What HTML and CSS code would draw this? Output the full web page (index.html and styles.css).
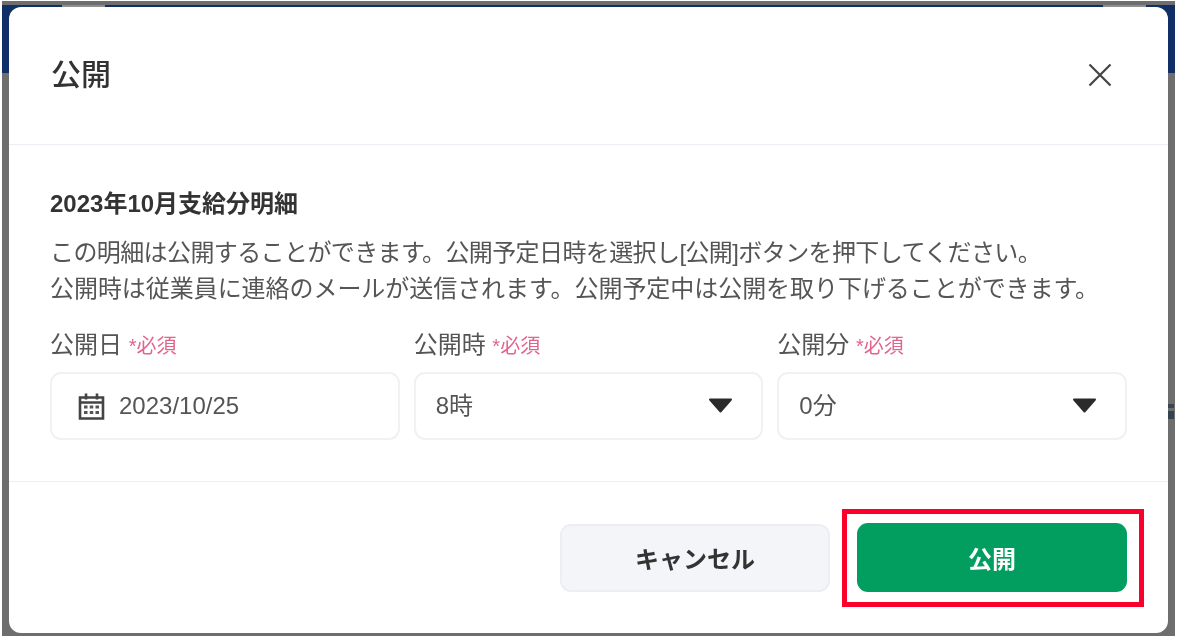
FILE: index.html
```html
<!DOCTYPE html>
<html lang="ja">
<head>
<meta charset="utf-8">
<title>公開</title>
<link rel="stylesheet" href="styles.css">
</head>
<body>
<div class="stage">
  <div class="nav-band"></div>
  <div class="nav-tab nav-tab-left"></div>
  <div class="nav-tab nav-tab-right"></div>
  <div class="peek"></div>
  <section class="modal">
    <header class="modal-head">
      <h1 class="modal-title">公開</h1>
      <svg class="close" viewBox="0 0 24 24" aria-label="閉じる"><path d="M1.5 1.5 22.5 22.5M22.5 1.5 1.5 22.5"/></svg>
    </header>
    <div class="modal-body">
      <h2 class="sub">2023年10月支給分明細</h2>
      <p class="desc"><span class="line-a">この明細は公開することができます。公開予定日時を選択し[公開]ボタンを押下してください。</span><br>公開時は従業員に連絡のメールが送信されます。公開予定中は公開を取り下げることができます。</p>
      <div class="fields">
        <div class="field">
          <div class="label">公開日 <span class="req">*必須</span></div>
          <div class="box">
            <svg class="cal" viewBox="0 0 26 28"><path class="cal-line" d="M1.500 5.500h23v21h-23zM7.500 1.500v6M18.500 1.500v6M1.500 10.500h23"/><path class="cal-dots" d="M5.500 13.500h3.500v3H5.500zM11.250 13.500h3.500v3h-3.500zM17 13.500h3.500v3H17zM5.500 19h3.500v3H5.500zM11.250 19h3.500v3h-3.500zM17 19h3.500v3H17z"/></svg>
            <span class="val">2023/10/25</span>
          </div>
        </div>
        <div class="field">
          <div class="label">公開時 <span class="req">*必須</span></div>
          <div class="box box-select"><span class="val">8時</span><svg class="caret" viewBox="0 0 25 16"><path d="M2 1.500h21L12.500 13.500z"/></svg></div>
        </div>
        <div class="field">
          <div class="label">公開分 <span class="req">*必須</span></div>
          <div class="box box-select"><span class="val">0分</span><svg class="caret" viewBox="0 0 25 16"><path d="M2 1.500h21L12.500 13.500z"/></svg></div>
        </div>
      </div>
    </div>
    <footer class="modal-foot">
      <button class="btn btn-cancel">キャンセル</button>
      <span class="highlight"><button class="btn btn-go">公開</button></span>
    </footer>
  </section>
</div>
</body>
</html>
```
FILE: styles.css
```css
* { box-sizing: border-box; }
html, body { margin: 0; height: 100%; }
body { background: #fff; overflow: hidden; font-family: "Liberation Sans", "Noto Sans CJK JP", sans-serif; color: #333; }
.stage { position: relative; width: 1181px; height: 636px; background: #fff; padding: 7px 13px 3px 9px; filter: blur(0.45px); }
.stage::before { content: ""; position: absolute; left: 2px; right: 6px; top: 1px; bottom: 0; background: #6e6e6e; }
.nav-band { position: absolute; left: 2px; right: 6px; top: 5px; height: 68px; background: #0f2f66; }
.nav-tab { position: absolute; top: 5px; width: 43px; height: 2px; background: #8f8f8f; }
.nav-tab-left { left: 62px; }
.nav-tab-right { left: 1103px; }
.peek { position: absolute; left: 1168px; top: 401px; width: 6px; height: 20px; background: linear-gradient(#6e6e6e 0 15%, #3a4654 15% 35%, #6e6e6e 35% 50%, #36424f 50% 90%, #6e6e6e 90%); }
.modal { position: relative; height: 626px; background: #fff; border-radius: 12px; display: flex; flex-direction: column; }
.modal-head { height: 138px; flex: none; border-bottom: 1px solid #eceef3; display: flex; align-items: flex-start; justify-content: space-between; padding: 48px 56px 0 42px; }
.modal-title { margin: 0; font-size: 30px; line-height: 40px; font-weight: 500; color: #333; }
.close { width: 24px; height: 24px; margin-top: 8px; }
.close path { fill: none; stroke: #444; stroke-width: 2.200; }
.modal-body { height: 337px; flex: none; padding: 42px 41px 0; border-bottom: 1px solid #eceef3; }
.sub { margin: 0; font-size: 24px; line-height: 34px; font-weight: 700; color: #333; }
.desc { margin: 14px 0 0; font-size: 24px; line-height: 36px; color: #555; white-space: nowrap; letter-spacing: -0.05px; }
.line-a { letter-spacing: -0.6px; }
.fields { display: flex; gap: 14px; margin-top: 21px; }
.field { flex: 1; }
.label { font-size: 24px; line-height: 34px; color: #555; }
.req { color: #e2648c; font-size: 20px; }
.box { height: 68px; margin-top: 9px; border: 2px solid #f0f1f4; border-radius: 11px; display: flex; align-items: center; padding: 0 26px; font-size: 24px; color: #555; }
.box-select { justify-content: space-between; padding: 0 28px 0 20px; }
.val { line-height: 28px; height: 28px; }
.cal { width: 27px; height: 28px; margin-right: 14px; }
.cal-line { fill: none; stroke: #444; stroke-width: 2.600; }
.cal-dots { fill: #555; }
.caret { width: 25px; height: 16px; }
.caret path { fill: #2b2b2b; stroke: #2b2b2b; stroke-width: 2; stroke-linejoin: round; }
.modal-foot { flex: 1; display: flex; justify-content: flex-end; align-items: center; padding: 0 24px 0 0; gap: 12px; }
.btn { font-family: inherit; border-radius: 11px; font-size: 24px; font-weight: 700; height: 68px; width: 270px; }
.btn-cancel { background: #f4f5f9; border: 2px solid #eceef3; color: #333; }
.highlight { border: 5px solid #fa002c; padding: 9px 12px 10px 10px; display: flex; }
.btn-go { height: 69px; background: #029e5f; border: 0; color: #fff; }
```
